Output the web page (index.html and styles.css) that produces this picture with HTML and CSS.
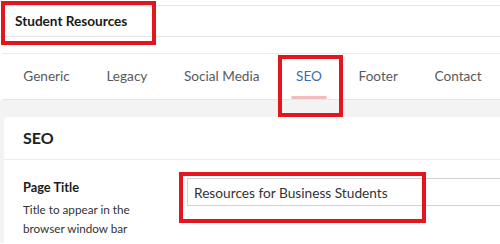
FILE: index.html
```html
<!DOCTYPE html>
<html lang="en">
<head>
  <meta charset="UTF-8">
  <meta name="viewport" content="width=device-width, initial-scale=1.0">
  <title>Student Resources</title>
  <link rel="stylesheet" href="styles.css">
</head>
<body>
  <div class="title-bar">
    <span class="page-name">Student Resources</span>
  </div>

  <div class="tabs">
    <a href="#">Generic</a>
    <a href="#">Legacy</a>
    <a href="#">Social Media</a>
    <a href="#" class="active">SEO</a>
    <a href="#">Footer</a>
    <a href="#">Contact</a>
  </div>

  <div class="content">
    <div class="card">
      <h3>SEO</h3>
      <div class="field">
        <div class="field-label">
          <p class="label">Page Title</p>
          <p class="help">Title to appear in the browser window bar</p>
        </div>
        <input type="text" class="field-input" value="Resources for Business Students">
      </div>
    </div>
  </div>

  <!-- annotation boxes -->
  <div class="mark mark-title"></div>
  <div class="mark mark-tab"></div>
  <div class="mark mark-input"></div>
</body>
</html>
```

FILE: styles.css
```css
body {
  font-family: Lato, "Liberation Sans", sans-serif;
  margin: 0;
  padding: 0;
  color: #222;
  background-color: #fff;
  overflow: hidden;
}
.title-bar {
  margin-top: 5px;
  height: 30px;
  border-top: 1px solid #e6e6e6;
  border-bottom: 1px solid #e6e6e6;
  display: flex;
  align-items: center;
  padding-left: 15px;
}
.page-name {
  font-weight: bold;
  font-size: 13.6px;
  color: #1a1a1a;
}
.tabs {
  margin-top: 16px;
  margin-left: 2px;
  height: 45px;
  border-top: 1px solid #ebebeb;
  border-bottom: 1px solid #e6e6e6;
  display: flex;
  align-items: center;
  padding-left: 3px;
}
.tabs a {
  position: relative;
  flex-shrink: 0;
  white-space: nowrap;
  padding: 0 18.3px;
  font-size: 13.6px;
  color: #5a5a5a;
  text-decoration: none;
  height: 45px;
  line-height: 44px;
}
.tabs a.active {
  color: #3d6db5;
}
.tabs a.active::after {
  content: "";
  position: absolute;
  left: 13px;
  right: 13px;
  bottom: 0;
  height: 3px;
  border-radius: 2px;
  background-color: #f3bcbc;
}
.content {
  background-color: #f4f3f3;
  padding: 17px 0 0 4px;
}
.card {
  background-color: #fff;
  border-radius: 4px 0 0 0;
  height: 126px;
}
.card h3 {
  margin: 0;
  font-size: 16px;
  padding: 0 0 0 19px;
  height: 42px;
  line-height: 42px;
  border-bottom: 1px solid #ececec;
}
.field {
  display: flex;
  padding: 18px 0 0 19px;
}
.field-label {
  width: 164px;
}
.field-label p {
  margin: 0;
}
.label {
  font-weight: bold;
  font-size: 12.8px;
  color: #1a1a1a;
  line-height: 18px;
}
.help {
  width: 125px;
  font-size: 11.7px;
  line-height: 19px;
  color: #333;
  margin-top: 4px !important;
}
.field-input {
  flex: 1;
  height: 28px;
  box-sizing: border-box;
  border: 1px solid #d2d2d2;
  border-right: none;
  font-family: Lato, "Liberation Sans", sans-serif;
  font-size: 13.7px;
  color: #333;
  padding: 0 6px;
  outline: none;
}
.mark {
  position: absolute;
  border: 4px solid #e3161d;
  box-sizing: border-box;
}
.mark-title {
  left: 1px;
  top: 1px;
  width: 155px;
  height: 44px;
}
.mark-tab {
  left: 278px;
  top: 55px;
  width: 65px;
  height: 62px;
}
.mark-input {
  left: 179px;
  top: 172px;
  width: 247px;
  height: 51px;
}
```
